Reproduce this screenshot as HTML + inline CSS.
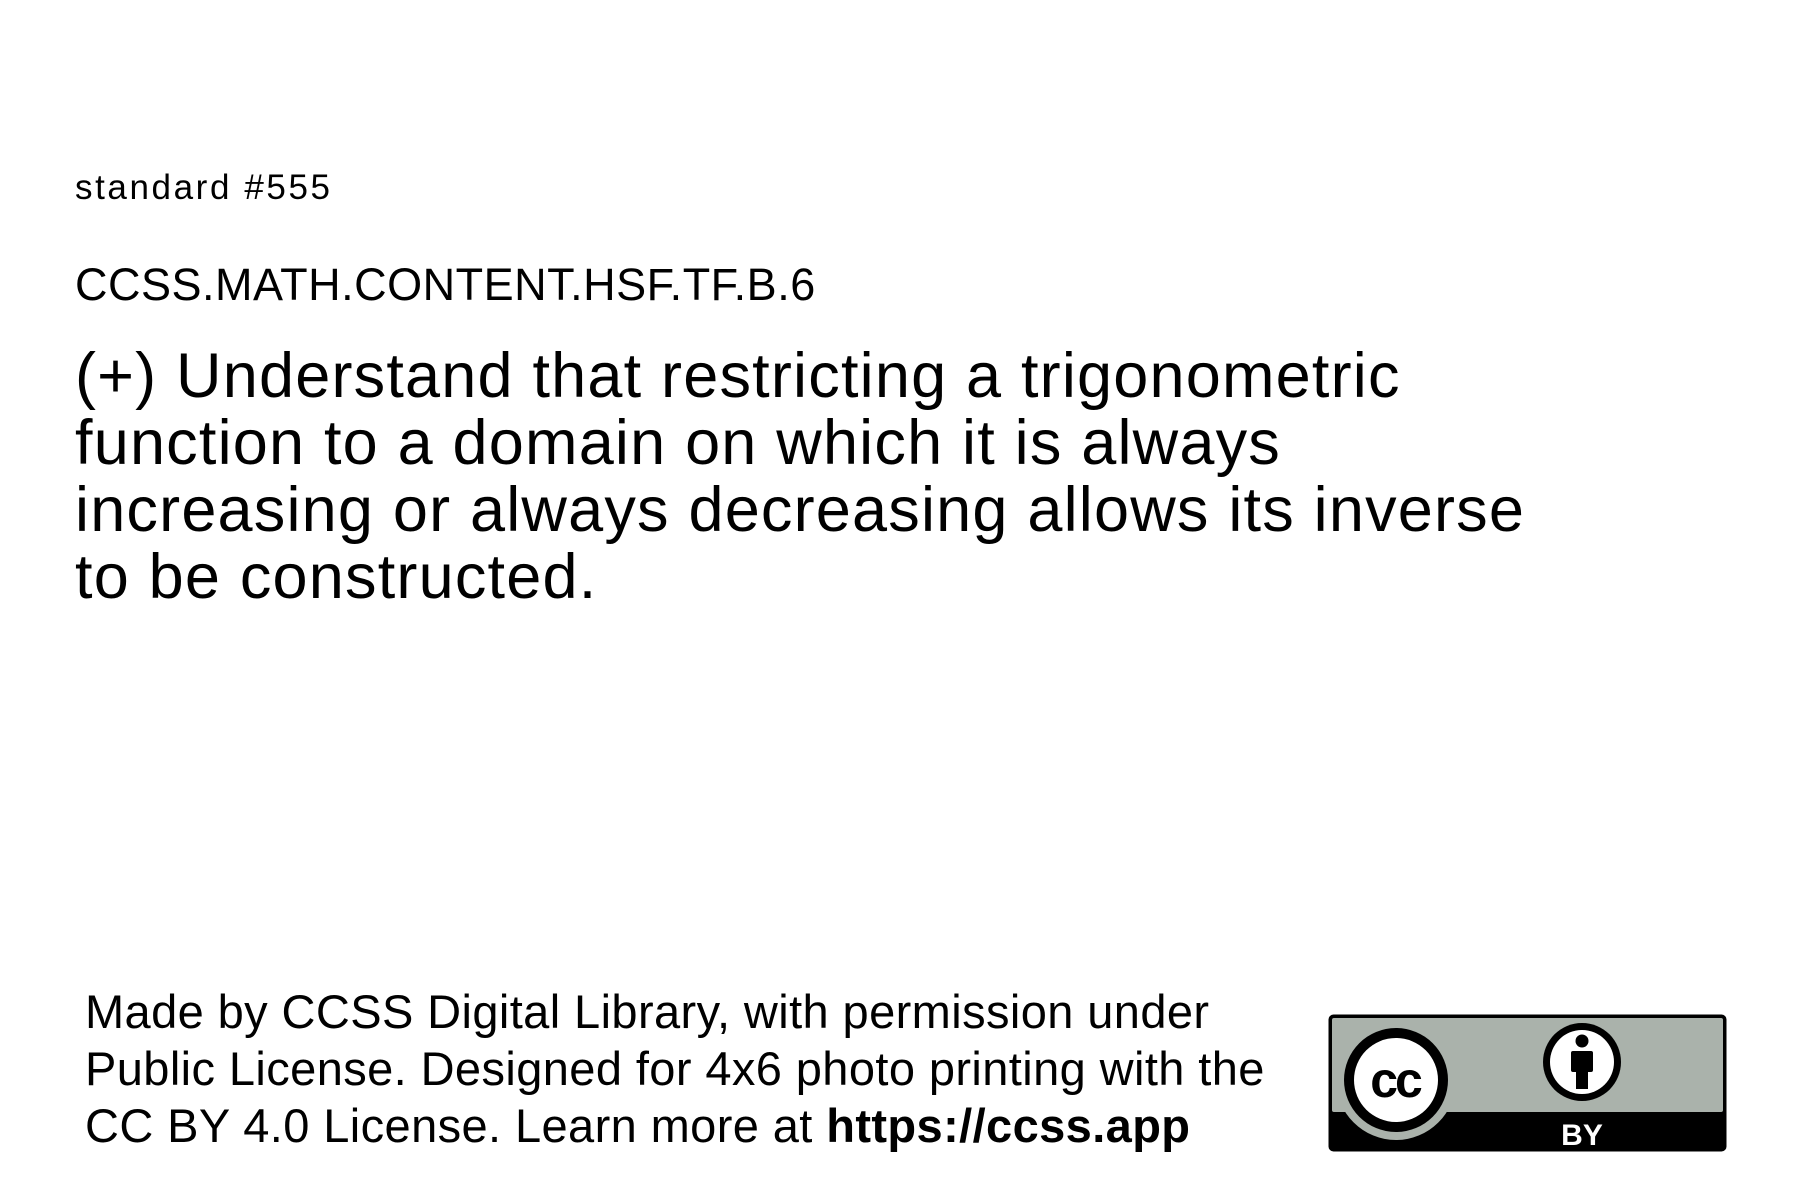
<!DOCTYPE html>
<html><head><meta charset="utf-8"><style>
html,body{margin:0;padding:0;background:#fff;width:1800px;height:1200px;overflow:hidden;position:relative}
.t{position:absolute;left:75px;color:#000;font-family:"Liberation Sans",sans-serif;white-space:nowrap}
#s{top:168px;font-size:35px;letter-spacing:2.6px}
#c{top:259px;font-size:45px;letter-spacing:0.5px}
#b{top:343px;font-size:63px;line-height:67px;letter-spacing:1.2px}
#f{left:85px;top:983px;font-size:47px;line-height:57px;letter-spacing:0.4px}
</style></head><body>
<div class="t" id="s">standard #555</div>
<div class="t" id="c">CCSS.MATH.CONTENT.HSF.TF.B.6</div>
<div class="t" id="b">(+) Understand that restricting a trigonometric<br>function to a domain on which it is always<br>increasing or always decreasing allows its inverse<br>to be constructed.</div>
<div class="t" id="f">Made by CCSS Digital Library, with permission under<br>Public License. Designed for 4x6 photo printing with the<br>CC BY 4.0 License. Learn more at <b>https://ccss.app</b></div>
<svg style="position:absolute;left:0;top:0" width="1800" height="1200">
<defs><clipPath id="cp"><rect x="1332" y="1018" width="391" height="131" rx="2"/></clipPath></defs>
<rect x="1328.5" y="1014.5" width="398" height="137" rx="5" fill="#000"/>
<rect x="1332" y="1018" width="391" height="94" rx="2" fill="#aab2ab"/>
<g clip-path="url(#cp)"><circle cx="1396" cy="1080" r="60" fill="#aab2ab"/></g>
<circle cx="1396" cy="1080" r="52" fill="#000"/>
<circle cx="1396" cy="1080" r="42" fill="#fff"/>
<text x="1395" y="1097" text-anchor="middle" font-family="Liberation Sans,sans-serif" font-weight="bold" font-size="50" letter-spacing="-3">cc</text>
<circle cx="1582" cy="1062" r="39" fill="#000"/>
<circle cx="1582" cy="1062" r="32" fill="#fff"/>
<circle cx="1582" cy="1041" r="6.5" fill="#000"/>
<rect x="1571" y="1051" width="22" height="21" rx="2" fill="#000"/>
<rect x="1576" y="1070" width="12" height="19" fill="#000"/>
<text x="1582" y="1145" text-anchor="middle" fill="#fff" font-family="Liberation Sans,sans-serif" font-weight="bold" font-size="30">BY</text>
</svg>
</body></html>
